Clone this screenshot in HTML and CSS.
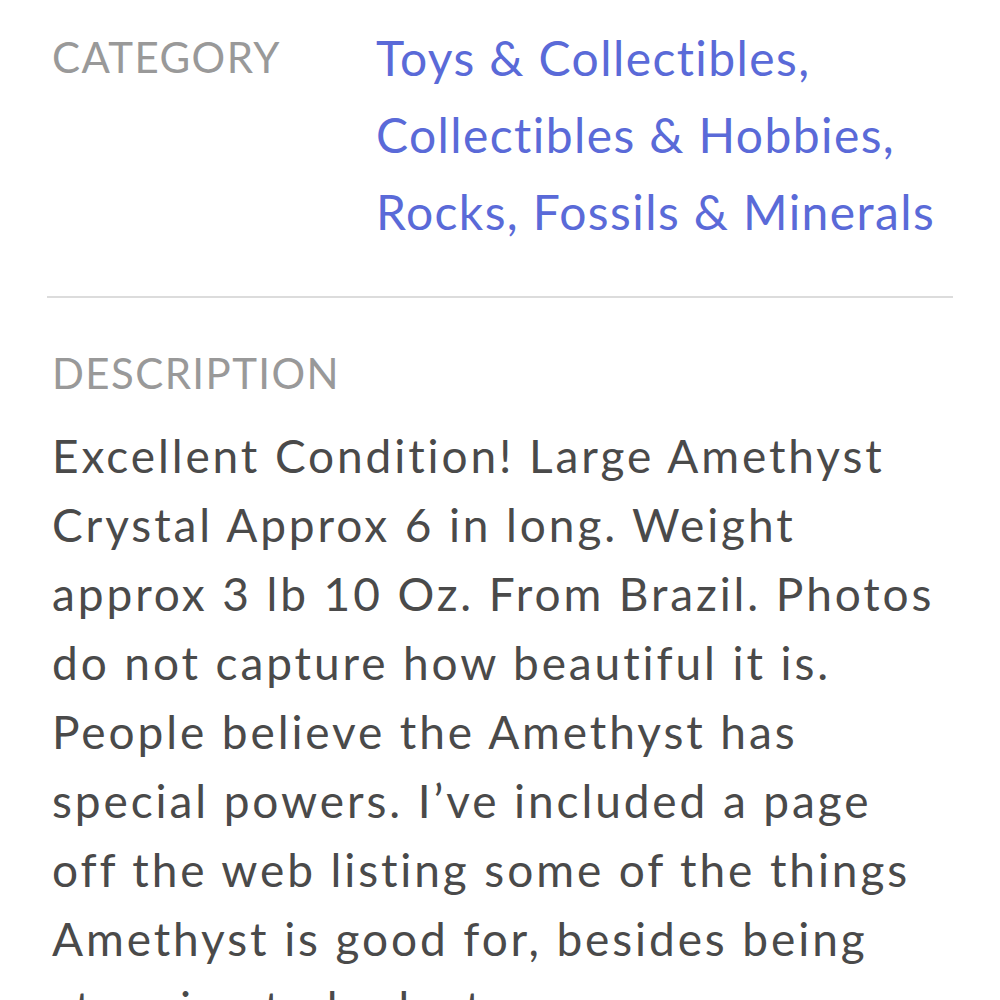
FILE: index.html
```html
<!DOCTYPE html>
<html lang="en">
<head>
<meta charset="utf-8">
<title>Item details</title>
<link rel="stylesheet" href="styles.css">
</head>
<body>
<main class="details">
  <section class="row">
    <div class="label">CATEGORY</div>
    <div class="links">
      <a class="link" href="#">Toys &amp; Collectibles,</a><br>
      <a class="link" href="#">Collectibles &amp; Hobbies,</a><br>
      <a class="link" href="#">Rocks, Fossils &amp; Minerals</a>
    </div>
  </section>
  <hr class="divider">
  <section class="desc">
    <div class="label">DESCRIPTION</div>
    <p class="body">Excellent Condition! Large Amethyst<br>Crystal Approx 6 in long. Weight<br>approx 3 lb 10 Oz. From Brazil. Photos<br>do not capture how beautiful it is.<br>People believe the Amethyst has<br>special powers. I’ve included a page<br>off the web listing some of the things<br>Amethyst is good for, besides being<br>stunning to look at.</p>
  </section>
</main>
</body>
</html>
```
FILE: styles.css
```css
html, body {
  margin: 0;
  padding: 0;
  background: #ffffff;
}
body {
  font-family: Lato, "Open Sans", sans-serif;
  overflow: hidden;
  height: 1000px;
}
.details {
  padding: 19px 47px 0 47px;
}
.row {
  display: flex;
  align-items: flex-start;
}
.label {
  color: #999999;
  font-size: 42px;
  line-height: 77px;
  letter-spacing: 1.4px;
  padding-left: 5px;
}
.row .label {
  width: 324px;
  flex: none;
}
.links {
  font-size: 48px;
  line-height: 77px;
  letter-spacing: 1.4px;
}
.link {
  color: #5a6ad8;
  text-decoration: none;
}
.divider {
  border: none;
  border-top: 2px solid #dcdcdc;
  margin: 46px 0 0 0;
}
.desc {
  padding-top: 40px;
}
.desc .label {
  line-height: 70px;
}
.body {
  margin: 13px 0 0 0;
  padding-left: 5px;
  color: #4a4a4a;
  font-size: 46px;
  line-height: 69px;
  letter-spacing: 2.9px;
}
```
